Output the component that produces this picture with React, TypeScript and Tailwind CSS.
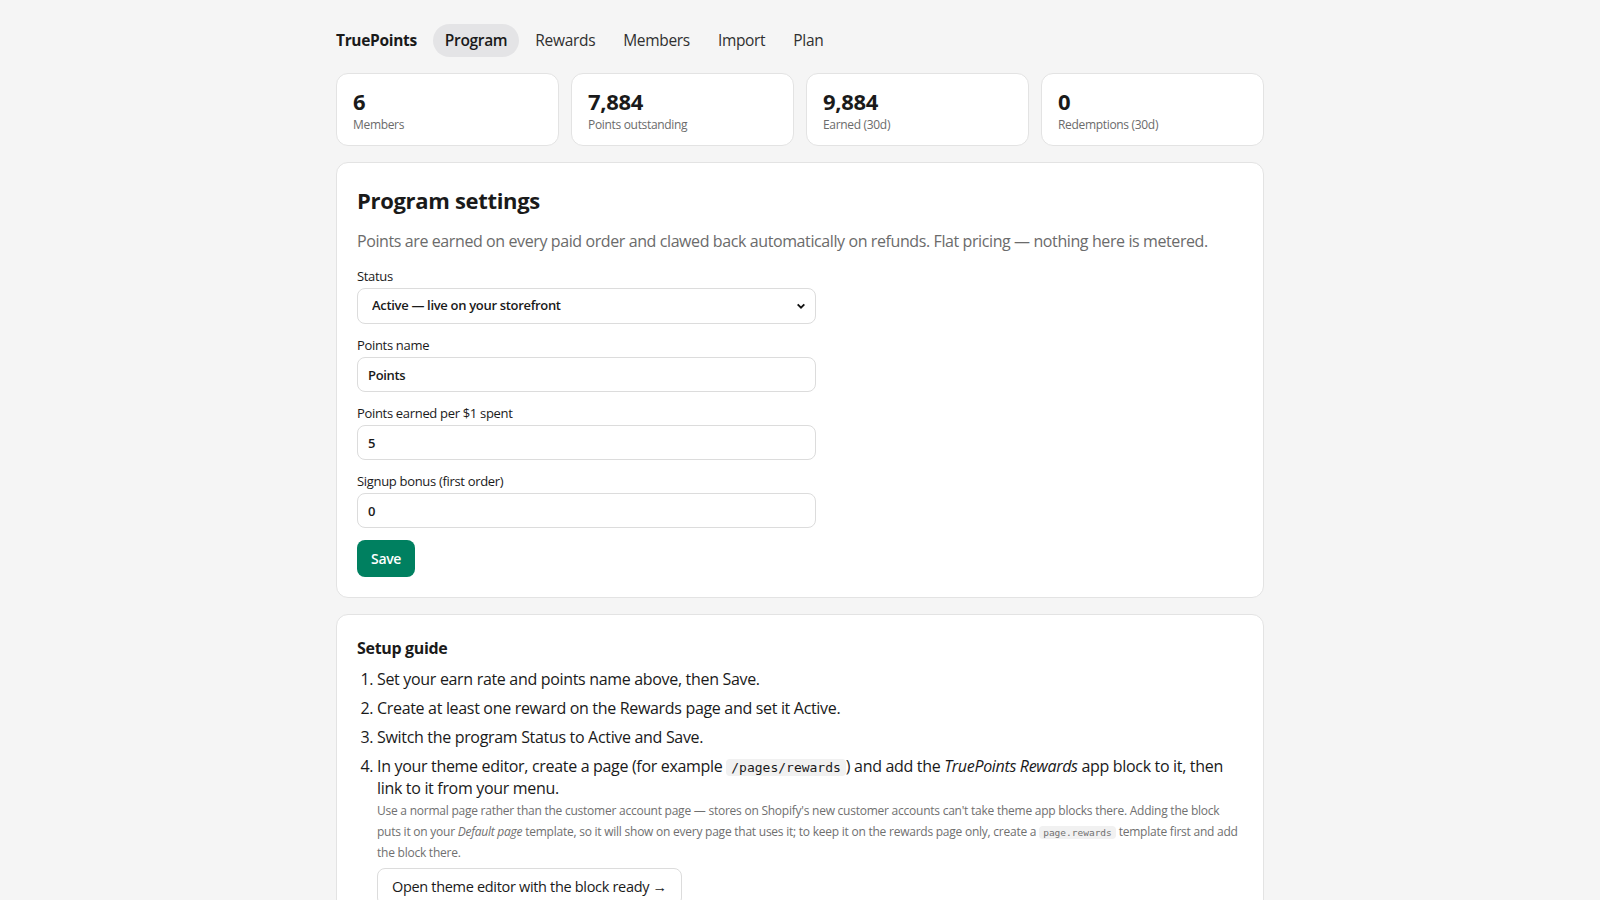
import { useState } from "react";

type Stat = { value: string; label: string };

const stats: Stat[] = [
  { value: "6", label: "Members" },
  { value: "7,884", label: "Points outstanding" },
  { value: "9,884", label: "Earned (30d)" },
  { value: "0", label: "Redemptions (30d)" },
];

const tabs = ["Program", "Rewards", "Members", "Import", "Plan"];

const mono = { fontFamily: '"DejaVu Sans Mono", "Liberation Mono", monospace' };

function Field({
  label,
  value,
  onChange,
}: {
  label: string;
  value: string;
  onChange: (v: string) => void;
}) {
  return (
    <label className="mt-3 block max-w-[459px]">
      <span className="block text-[13px] font-medium leading-[18px]">{label}</span>
      <input
        value={value}
        onChange={(e) => onChange(e.target.value)}
        className="mt-[3px] block h-[35px] w-full rounded-lg border border-[#dcdcdc] bg-white px-[10px] text-[13px] font-semibold text-[#1a1a1a] outline-none focus:border-[#8a8a8a]"
      />
    </label>
  );
}

export default function App() {
  const [tab, setTab] = useState("Program");
  const [status, setStatus] = useState("active");
  const [pointsName, setPointsName] = useState("Points");
  const [earnRate, setEarnRate] = useState("5");
  const [signupBonus, setSignupBonus] = useState("0");

  return (
    <div
      className="min-h-screen bg-[#f5f5f5] tracking-[-0.02em] text-[#1a1a1a]"
      style={{ fontFamily: '"Open Sans", "Noto Sans", sans-serif' }}
    >
      <div className="mx-auto max-w-[960px] px-4 pt-6 pb-10">
        {/* top nav */}
        <nav className="flex items-center gap-1">
          <span className="mr-3 text-[15.5px] font-bold">TruePoints</span>
          {tabs.map((t) => (
            <button
              key={t}
              type="button"
              onClick={() => setTab(t)}
              className={`h-[33px] rounded-full px-3 text-[15.5px] ${
                tab === t ? "bg-[#e4e4e6] font-semibold" : "text-[#303030]"
              }`}
            >
              {t}
            </button>
          ))}
        </nav>

        {/* stats */}
        <div className="mt-4 grid grid-cols-4 gap-3">
          {stats.map((s) => (
            <div
              key={s.label}
              className="h-[73px] rounded-xl border border-[#e3e3e3] bg-white px-4 pt-[13px]"
            >
              <div className="text-[22px] font-bold leading-[28px]">{s.value}</div>
              <div className="mt-[2px] text-[12px] leading-[16px] text-[#6b6b6b]">{s.label}</div>
            </div>
          ))}
        </div>

        {/* program settings */}
        <section className="mt-4 rounded-xl border border-[#e3e3e3] bg-white p-5">
          <h2 className="mt-[2px] text-[22px] font-bold leading-[30px]">Program settings</h2>
          <p className="mt-[15px] text-[16px] leading-[22px] tracking-[-0.025em] text-[#6b6b6b]">
            Points are earned on every paid order and clawed back automatically on refunds. Flat
            pricing — nothing here is metered.
          </p>

          <label className="mt-[15px] block max-w-[459px]">
            <span className="block text-[13px] font-medium leading-[18px]">Status</span>
            <div className="relative mt-[3px]">
              <select
                value={status}
                onChange={(e) => setStatus(e.target.value)}
                className="block h-[36px] w-full appearance-none rounded-lg border border-[#dcdcdc] bg-white pl-[14px] text-[13px] font-semibold text-[#1a1a1a] outline-none"
              >
                <option value="active">Active — live on your storefront</option>
                <option value="paused">Paused — hidden from customers</option>
              </select>
              <svg
                viewBox="0 0 12 12"
                className="pointer-events-none absolute top-1/2 right-[10px] h-[10px] w-[10px] -translate-y-1/2"
              >
                <path d="M2 4l4 4 4-4" fill="none" stroke="#111" strokeWidth="2.2" />
              </svg>
            </div>
          </label>

          <Field label="Points name" value={pointsName} onChange={setPointsName} />
          <Field label="Points earned per $1 spent" value={earnRate} onChange={setEarnRate} />
          <Field label="Signup bonus (first order)" value={signupBonus} onChange={setSignupBonus} />

          <button
            type="button"
            className="mt-3 h-[37px] rounded-lg bg-[#008060] px-[14px] text-[14px] font-semibold text-white"
          >
            Save
          </button>
        </section>

        {/* setup guide */}
        <section className="mt-4 rounded-xl border border-[#e3e3e3] bg-white p-5">
          <h3 className="mt-[2px] text-[16px] font-bold leading-[22px]">Setup guide</h3>
          <ol className="mt-[10px] list-decimal space-y-[8px] pl-[20px] text-[16px] leading-[21px]">
            <li>Set your earn rate and points name above, then Save.</li>
            <li>Create at least one reward on the Rewards page and set it Active.</li>
            <li>Switch the program Status to Active and Save.</li>
            <li>
              In your theme editor, create a page (for example{" "}
              <code
                className="rounded bg-[#f1f1f1] px-[5px] py-[1px] text-[13px] tracking-normal"
                style={mono}
              >
                /pages/rewards
              </code>
              ) and add the <em>TruePoints Rewards</em> app block to it, then link to it from your
              menu.
              <p className="mt-[2px] pr-[3px] text-[12px] leading-[20.5px] tracking-[-0.02em] text-[#707070]">
                Use a normal page rather than the customer account page — stores on Shopify's new
                customer accounts can't take theme app blocks there. Adding the block puts it on
                your <em>Default page</em> template, so it will show on every page that uses it; to
                keep it on the rewards page only, create a{" "}
                <code
                  className="rounded bg-[#f1f1f1] px-[4px] py-[1px] text-[9.5px] tracking-normal"
                  style={mono}
                >
                  page.rewards
                </code>{" "}
                template first and add the block there.
              </p>
              <button
                type="button"
                className="mt-[4px] h-[38px] rounded-lg border border-[#dcdcdc] bg-white px-[14px] text-[14.5px] font-medium"
              >
                Open theme editor with the block ready →
              </button>
            </li>
          </ol>
        </section>
      </div>
    </div>
  );
}
